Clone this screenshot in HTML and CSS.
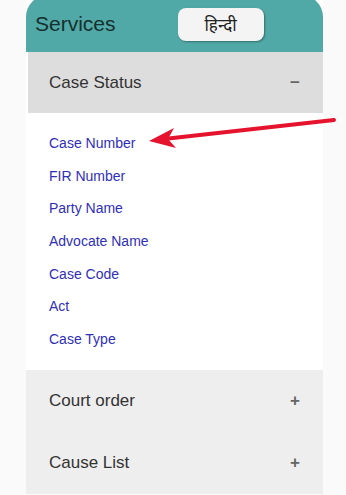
FILE: index.html
```html
<!DOCTYPE html>
<html lang="en">
<head>
    <meta charset="UTF-8">
    <meta name="viewport" content="width=device-width, initial-scale=1.0">
    <title>Services</title>
    <link rel="stylesheet" href="styles.css">
</head>
<body>

<div class="panel">
    <div class="panel-head">
        <span class="title">Services</span>
        <button class="lang">हिन्दी</button>
    </div>

    <div class="section open">
        <span>Case Status</span>
        <span class="sign">&minus;</span>
    </div>
    <ul class="links">
        <li><a href="#">Case Number</a></li>
        <li><a href="#">FIR Number</a></li>
        <li><a href="#">Party Name</a></li>
        <li><a href="#">Advocate Name</a></li>
        <li><a href="#">Case Code</a></li>
        <li><a href="#">Act</a></li>
        <li><a href="#">Case Type</a></li>
    </ul>

    <div class="section">
        <span>Court order</span>
        <span class="sign">+</span>
    </div>
    <div class="section">
        <span>Cause List</span>
        <span class="sign">+</span>
    </div>
</div>

<svg class="arrow" width="346" height="200" viewBox="0 0 346 200">
    <line x1="334" y1="120" x2="164" y2="139" stroke="#e5132e" stroke-width="4" stroke-linecap="round"/>
    <polygon points="149,141 174,128 168,139 176,148" fill="#e5132e"/>
</svg>

</body>
</html>
```

FILE: styles.css
```css
* {
    box-sizing: border-box;
    margin: 0;
    padding: 0;
}
body {
    font-family: 'Liberation Sans', Arial, sans-serif;
    background: #fafafa;
    color: #333;
    width: 346px;
    height: 495px;
    overflow: hidden;
    position: relative;
}
.panel {
    width: 297px;
    margin-left: 26px;
    margin-top: -5px;
    background: #fff;
}
.panel-head {
    height: 57px;
    padding: 1px 0 0 9px;
    background: #51a9a7;
    border-radius: 22px 22px 0 0;
    display: flex;
    align-items: center;
}
.title {
    font-size: 21px;
    color: #16302f;
}
.lang {
    margin-left: 62px;
    width: 86px;
    height: 33px;
    border: none;
    border-radius: 8px;
    background: #f4f4f4;
    box-shadow: 1px 1px 2px rgba(0, 0, 0, 0.35);
    font-family: 'Liberation Serif', 'Noto Sans', serif;
    font-size: 17px;
    color: #222;
}
.section {
    height: 62px;
    padding: 0 23px 0 23px;
    background: #eeeeee;
    display: flex;
    align-items: center;
    justify-content: space-between;
    font-size: 17px;
    color: #333;
}
.section.open {
    height: 61px;
    margin-left: 2px;
    background: #dddddd;
}
.section.open span:first-child {
    margin-left: -2px;
}
.sign {
    font-size: 17px;
    font-weight: bold;
    color: #666;
}
.links {
    list-style: none;
    padding: 14px 0 15px 23px;
}
.links li {
    height: 32.6px;
    display: flex;
    align-items: center;
}
.links a {
    font-size: 14px;
    color: #2f2fba;
    text-decoration: none;
}
.arrow {
    position: absolute;
    left: 0;
    top: 0;
}
```
